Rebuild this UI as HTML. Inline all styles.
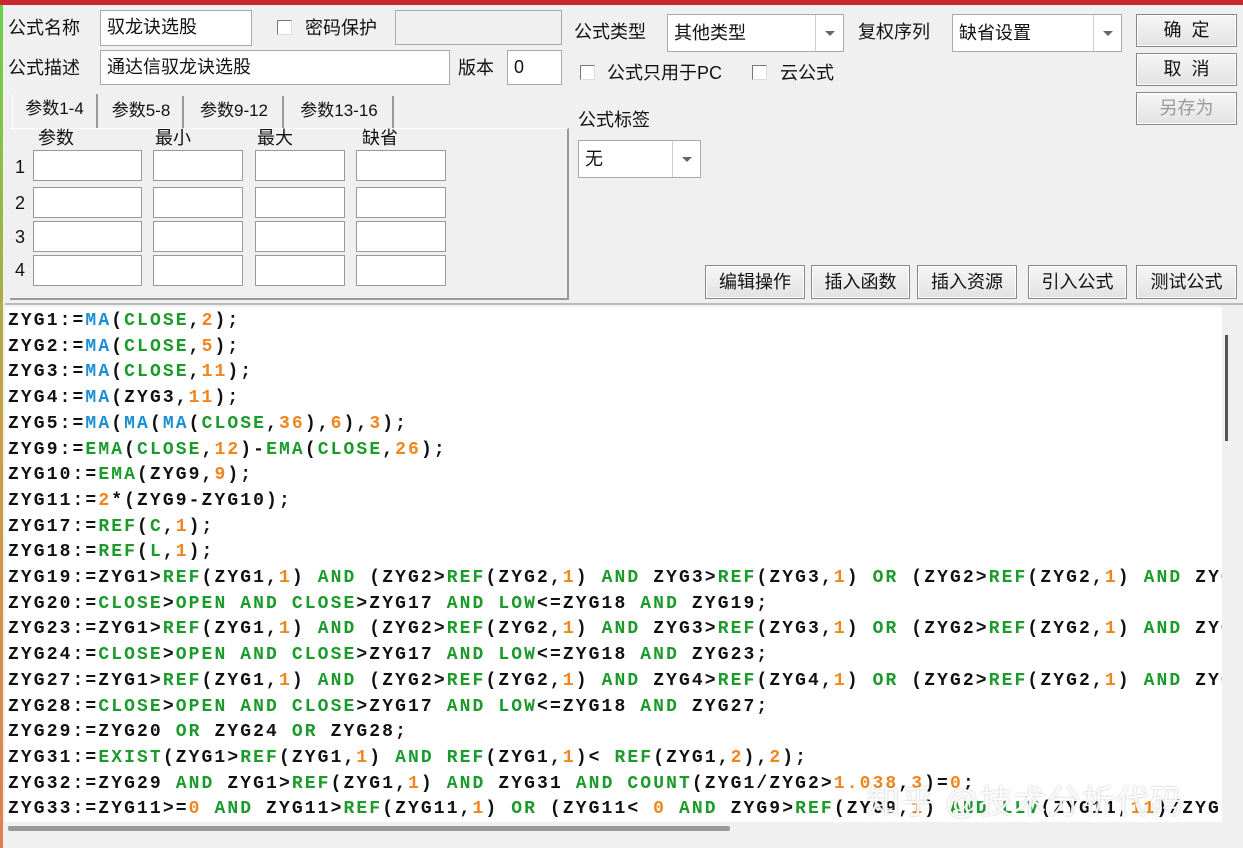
<!DOCTYPE html>
<html><head><meta charset="utf-8"><style>
*{margin:0;padding:0;box-sizing:border-box}
body{width:1243px;height:848px;background:#f0f0f0;position:relative;overflow:hidden;font-family:"Liberation Sans","Noto Sans CJK SC",sans-serif;font-size:18px;color:#111}
.a{position:absolute}
.inp{position:absolute;background:#fff;border:1px solid #a9a9a9;padding-left:6px;line-height:32px;font-size:18px}
.lbl{position:absolute;font-size:18px;line-height:20px}
.cb{position:absolute;width:15px;height:15px;border:1px solid #777;border-right-color:#ddd;border-bottom-color:#ddd;background:#fff}
.btn{position:absolute;border:1px solid #888;background:linear-gradient(#f6f6f6,#e2e2e2);text-align:center;font-size:18px;box-shadow:inset 0 0 0 1px #fff}
.dd{position:absolute;right:0;top:0;bottom:0;width:28px;border-left:1px solid #ccc}
.dd:after{content:"";position:absolute;left:9px;top:50%;margin-top:-2px;border:5px solid transparent;border-top:5px solid #666}
.tab{position:absolute;top:96px;height:32px;line-height:30px;font-size:17px;text-align:center;border-right:2px solid #999}
.pi{position:absolute;background:#fff;border:1px solid #999;height:31px}
#ed{position:absolute;left:5px;top:307px;width:1217px;height:515px;background:#fff;overflow:hidden}
pre{font-family:"Liberation Mono",monospace;font-weight:bold;font-size:18px;letter-spacing:2.1px;line-height:25.7px;color:#111;padding-left:3px;padding-top:2px;white-space:pre}
b{font-weight:bold}.m{color:#1a8fd6}.g{color:#1c9a2c}.o{color:#f0851e}
</style></head><body>
<div class="a" style="left:0;top:0;width:1243px;height:5px;background:#c8282e"></div>
<div class="a" style="left:0;top:5px;width:3px;height:843px;background:linear-gradient(#6ad04a,#c8a040,#e08050)"></div>

<div class="lbl" style="left:8px;top:18px">公式名称</div>
<div class="inp" style="left:100px;top:10px;width:152px;height:36px">驭龙诀选股</div>
<div class="cb" style="left:277px;top:20px"></div>
<div class="lbl" style="left:305px;top:18px">密码保护</div>
<div class="inp" style="left:395px;top:10px;width:167px;height:35px;background:#f0f0f0"></div>
<div class="lbl" style="left:8px;top:58px">公式描述</div>
<div class="inp" style="left:100px;top:50px;width:350px;height:35px">通达信驭龙诀选股</div>
<div class="lbl" style="left:458px;top:58px">版本</div>
<div class="inp" style="left:507px;top:50px;width:55px;height:35px">0</div>

<div class="tab" style="left:12px;width:86px;height:34px;top:94px;background:#f0f0f0;border-left:1px solid #fff">参数1-4</div>
<div class="tab" style="left:100px;width:84px">参数5-8</div>
<div class="tab" style="left:186px;width:98px">参数9-12</div>
<div class="tab" style="left:286px;width:108px">参数13-16</div>
<div class="a" style="left:10px;top:128px;width:559px;height:172px;border-right:2px solid #999;border-bottom:2px solid #999;border-top:1px solid #fff"></div>
<div class="lbl" style="left:38px;top:128px">参数</div>
<div class="lbl" style="left:155px;top:128px">最小</div>
<div class="lbl" style="left:257px;top:128px">最大</div>
<div class="lbl" style="left:362px;top:128px">缺省</div>
<div class="lbl" style="left:15px;top:157px">1</div><div class="lbl" style="left:15px;top:193px">2</div><div class="lbl" style="left:15px;top:227px">3</div><div class="lbl" style="left:15px;top:260px">4</div>
<div class="pi" style="left:33px;top:150px;width:109px"></div><div class="pi" style="left:153px;top:150px;width:90px"></div><div class="pi" style="left:255px;top:150px;width:90px"></div><div class="pi" style="left:356px;top:150px;width:90px"></div>
<div class="pi" style="left:33px;top:187px;width:109px"></div><div class="pi" style="left:153px;top:187px;width:90px"></div><div class="pi" style="left:255px;top:187px;width:90px"></div><div class="pi" style="left:356px;top:187px;width:90px"></div>
<div class="pi" style="left:33px;top:221px;width:109px"></div><div class="pi" style="left:153px;top:221px;width:90px"></div><div class="pi" style="left:255px;top:221px;width:90px"></div><div class="pi" style="left:356px;top:221px;width:90px"></div>
<div class="pi" style="left:33px;top:255px;width:109px"></div><div class="pi" style="left:153px;top:255px;width:90px"></div><div class="pi" style="left:255px;top:255px;width:90px"></div><div class="pi" style="left:356px;top:255px;width:90px"></div>

<div class="lbl" style="left:574px;top:22px">公式类型</div>
<div class="inp" style="left:667px;top:14px;width:177px;height:38px;line-height:36px">其他类型<div class="dd"></div></div>
<div class="lbl" style="left:858px;top:22px">复权序列</div>
<div class="inp" style="left:952px;top:14px;width:170px;height:38px;line-height:36px">缺省设置<div class="dd"></div></div>
<div class="btn" style="left:1136px;top:14px;width:101px;height:33px;line-height:31px">确&nbsp;&nbsp;定</div>
<div class="btn" style="left:1136px;top:53px;width:101px;height:33px;line-height:31px">取&nbsp;&nbsp;消</div>
<div class="btn" style="left:1136px;top:92px;width:101px;height:33px;line-height:31px;color:#999">另存为</div>
<div class="cb" style="left:580px;top:65px"></div><div class="lbl" style="left:607px;top:63px">公式只用于PC</div>
<div class="cb" style="left:752px;top:65px"></div><div class="lbl" style="left:780px;top:63px">云公式</div>
<div class="lbl" style="left:578px;top:110px">公式标签</div>
<div class="inp" style="left:578px;top:140px;width:123px;height:38px;line-height:36px">无<div class="dd"></div></div>

<div class="btn" style="left:705px;top:265px;width:100px;height:34px;line-height:32px">编辑操作</div>
<div class="btn" style="left:811px;top:265px;width:99px;height:34px;line-height:32px">插入函数</div>
<div class="btn" style="left:917px;top:265px;width:100px;height:34px;line-height:32px">插入资源</div>
<div class="btn" style="left:1028px;top:265px;width:99px;height:34px;line-height:32px">引入公式</div>
<div class="btn" style="left:1136px;top:265px;width:101px;height:34px;line-height:32px">测试公式</div>
<div class="a" style="left:5px;top:303px;width:1238px;height:2px;background:#bbb"></div>

<div id="ed"><pre>ZYG1:=<b class="m">MA</b>(<b class="g">CLOSE</b>,<b class="o">2</b>);
ZYG2:=<b class="m">MA</b>(<b class="g">CLOSE</b>,<b class="o">5</b>);
ZYG3:=<b class="m">MA</b>(<b class="g">CLOSE</b>,<b class="o">11</b>);
ZYG4:=<b class="m">MA</b>(ZYG3,<b class="o">11</b>);
ZYG5:=<b class="m">MA</b>(<b class="m">MA</b>(<b class="m">MA</b>(<b class="g">CLOSE</b>,<b class="o">36</b>),<b class="o">6</b>),<b class="o">3</b>);
ZYG9:=<b class="g">EMA</b>(<b class="g">CLOSE</b>,<b class="o">12</b>)-<b class="g">EMA</b>(<b class="g">CLOSE</b>,<b class="o">26</b>);
ZYG10:=<b class="g">EMA</b>(ZYG9,<b class="o">9</b>);
ZYG11:=<b class="o">2</b>*(ZYG9-ZYG10);
ZYG17:=<b class="g">REF</b>(<b class="g">C</b>,<b class="o">1</b>);
ZYG18:=<b class="g">REF</b>(<b class="g">L</b>,<b class="o">1</b>);
ZYG19:=ZYG1&gt;<b class="g">REF</b>(ZYG1,<b class="o">1</b>) <b class="g">AND</b> (ZYG2&gt;<b class="g">REF</b>(ZYG2,<b class="o">1</b>) <b class="g">AND</b> ZYG3&gt;<b class="g">REF</b>(ZYG3,<b class="o">1</b>) <b class="g">OR</b> (ZYG2&gt;<b class="g">REF</b>(ZYG2,<b class="o">1</b>) <b class="g">AND</b> ZYG3
ZYG20:=<b class="g">CLOSE</b>&gt;<b class="g">OPEN</b> <b class="g">AND</b> <b class="g">CLOSE</b>&gt;ZYG17 <b class="g">AND</b> <b class="g">LOW</b>&lt;=ZYG18 <b class="g">AND</b> ZYG19;
ZYG23:=ZYG1&gt;<b class="g">REF</b>(ZYG1,<b class="o">1</b>) <b class="g">AND</b> (ZYG2&gt;<b class="g">REF</b>(ZYG2,<b class="o">1</b>) <b class="g">AND</b> ZYG3&gt;<b class="g">REF</b>(ZYG3,<b class="o">1</b>) <b class="g">OR</b> (ZYG2&gt;<b class="g">REF</b>(ZYG2,<b class="o">1</b>) <b class="g">AND</b> ZYG3
ZYG24:=<b class="g">CLOSE</b>&gt;<b class="g">OPEN</b> <b class="g">AND</b> <b class="g">CLOSE</b>&gt;ZYG17 <b class="g">AND</b> <b class="g">LOW</b>&lt;=ZYG18 <b class="g">AND</b> ZYG23;
ZYG27:=ZYG1&gt;<b class="g">REF</b>(ZYG1,<b class="o">1</b>) <b class="g">AND</b> (ZYG2&gt;<b class="g">REF</b>(ZYG2,<b class="o">1</b>) <b class="g">AND</b> ZYG4&gt;<b class="g">REF</b>(ZYG4,<b class="o">1</b>) <b class="g">OR</b> (ZYG2&gt;<b class="g">REF</b>(ZYG2,<b class="o">1</b>) <b class="g">AND</b> ZYG3
ZYG28:=<b class="g">CLOSE</b>&gt;<b class="g">OPEN</b> <b class="g">AND</b> <b class="g">CLOSE</b>&gt;ZYG17 <b class="g">AND</b> <b class="g">LOW</b>&lt;=ZYG18 <b class="g">AND</b> ZYG27;
ZYG29:=ZYG20 <b class="g">OR</b> ZYG24 <b class="g">OR</b> ZYG28;
ZYG31:=<b class="g">EXIST</b>(ZYG1&gt;<b class="g">REF</b>(ZYG1,<b class="o">1</b>) <b class="g">AND</b> <b class="g">REF</b>(ZYG1,<b class="o">1</b>)&lt; <b class="g">REF</b>(ZYG1,<b class="o">2</b>),<b class="o">2</b>);
ZYG32:=ZYG29 <b class="g">AND</b> ZYG1&gt;<b class="g">REF</b>(ZYG1,<b class="o">1</b>) <b class="g">AND</b> ZYG31 <b class="g">AND</b> <b class="g">COUNT</b>(ZYG1/ZYG2&gt;<b class="o">1.038</b>,<b class="o">3</b>)=<b class="o">0</b>;
ZYG33:=ZYG11&gt;=<b class="o">0</b> <b class="g">AND</b> ZYG11&gt;<b class="g">REF</b>(ZYG11,<b class="o">1</b>) <b class="g">OR</b> (ZYG11&lt; <b class="o">0</b> <b class="g">AND</b> ZYG9&gt;<b class="g">REF</b>(ZYG9,<b class="o">1</b>) <b class="g">AND</b> <b class="g">LLV</b>(ZYG11,<b class="o">11</b>)/ZYG</pre>
<div class="a" style="left:862px;top:468px;font-size:33px;color:rgba(255,255,255,0.9);font-family:'Liberation Sans','Noto Sans CJK SC',sans-serif;text-shadow:0 0 2px rgba(0,0,0,0.25);letter-spacing:1px">知乎 @技术分析代码</div>
</div>
<div class="a" style="left:1225px;top:335px;width:3px;height:106px;background:#555"></div>
<div class="a" style="left:8px;top:826px;width:722px;height:5px;background:#999;border-radius:2px"></div>
</body></html>
